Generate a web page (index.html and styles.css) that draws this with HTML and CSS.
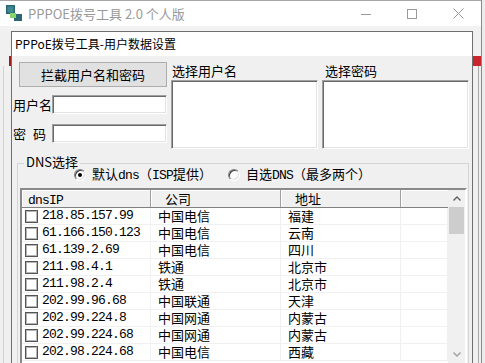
FILE: index.html
```html
<!DOCTYPE html>
<html lang="zh-CN">
<head>
    <meta charset="UTF-8">
    <meta name="viewport" content="width=device-width, initial-scale=1.0">
    <title>PPPOE拨号工具 2.0 个人版</title>
    <link rel="stylesheet" href="styles.css">
</head>
<body>
    <div class="screen">
        <div class="win">
            <div class="titlebar">
                <svg class="app-icon" width="16" height="16" viewBox="0 0 16 16">
                    <rect x="0" y="0" width="9" height="9" fill="#2b6673"/>
                    <rect x="1.5" y="1.5" width="6" height="6" fill="#3f8a93"/>
                    <rect x="8" y="9" width="8" height="7" fill="#2b6673"/>
                    <rect x="4" y="8" width="6" height="5" fill="#86d46c"/>
                </svg>
                <span class="title">PPPOE拨号工具 2.0 个人版</span>
                <div class="controls">
                    <span class="ctl">
                        <svg width="10" height="10" viewBox="0 0 10 10"><path d="M0 5.5H10" stroke="#9a9a9a" stroke-width="1"/></svg>
                    </span>
                    <span class="ctl">
                        <svg width="10" height="10" viewBox="0 0 10 10"><rect x="0.5" y="0.5" width="9" height="9" fill="none" stroke="#9a9a9a" stroke-width="1"/></svg>
                    </span>
                    <span class="ctl">
                        <svg width="11" height="11" viewBox="0 0 11 11"><path d="M0.5 0.5L10.5 10.5M10.5 0.5L0.5 10.5" stroke="#9a9a9a" stroke-width="1"/></svg>
                    </span>
                </div>
            </div>
            <div class="band"></div>

            <div class="client">
                <div class="side side-left">
                    <i class="red-mark"></i>
                    <i class="ghost-line"></i>
                </div>

                <div class="child">
                    <div class="child-title">PPPoE拨号工具-用户数据设置</div>
                    <div class="child-body">
                        <div class="top">
                            <div class="col-login">
                                <button type="button" class="btn">拦截用户名和密码</button>
                                <div class="field first">
                                    <label for="user">用户名</label>
                                    <input type="text" id="user" class="sunken">
                                </div>
                                <div class="field">
                                    <label for="pass" class="spaced">密 码</label>
                                    <input type="text" id="pass" class="sunken">
                                </div>
                            </div>
                            <div class="col-pick">
                                <div class="pick-label">选择用户名</div>
                                <div class="listbox sunken"></div>
                            </div>
                            <div class="col-pick">
                                <div class="pick-label shift">选择密码</div>
                                <div class="listbox sunken"></div>
                            </div>
                        </div>

                        <fieldset class="group">
                            <legend>DNS选择</legend>
                            <div class="radios">
                                <label class="radio-item wide">
                                    <span class="radio checked"></span>
                                    <span>默认<span class="en">dns</span>（<span class="en">ISP</span>提供）</span>
                                </label>
                                <label class="radio-item">
                                    <span class="radio"></span>
                                    <span>自选<span class="en">DNS</span>（最多两个）</span>
                                </label>
                            </div>

                            <div class="listview sunken">
                                <div class="lv-main">
                                    <div class="lv-head">
                                        <div class="hcell c1"><span class="en">dnsIP</span></div>
                                        <div class="hcell c2">公司</div>
                                        <div class="hcell c3">地址</div>
                                        <div class="hcell c4"></div>
                                    </div>
                                    <div id="rows"></div>
                                </div>
                                <div class="scrollbar">
                                    <div class="sb-btn">
                                        <svg width="8" height="5" viewBox="0 0 8 5"><path d="M0.5 4.5L4 1L7.5 4.5" fill="none" stroke="#606060" stroke-width="1.4"/></svg>
                                    </div>
                                    <div class="sb-thumb"></div>
                                    <div class="sb-track"></div>
                                    <div class="sb-btn">
                                        <svg width="8" height="5" viewBox="0 0 8 5"><path d="M0.5 0.5L4 4L7.5 0.5" fill="none" stroke="#a0a0a0" stroke-width="1.4"/></svg>
                                    </div>
                                </div>
                            </div>
                        </fieldset>
                    </div>
                </div>

                <div class="side side-right">
                    <i class="red-mark"></i>
                    <i class="ghost-line"></i>
                </div>
            </div>
        </div>
    </div>

    <script>
        const dnsList = [
            ["218.85.157.99", "中国电信", "福建"],
            ["61.166.150.123", "中国电信", "云南"],
            ["61.139.2.69", "中国电信", "四川"],
            ["211.98.4.1", "铁通", "北京市"],
            ["211.98.2.4", "铁通", "北京市"],
            ["202.99.96.68", "中国联通", "天津"],
            ["202.99.224.8", "中国网通", "内蒙古"],
            ["202.99.224.68", "中国网通", "内蒙古"],
            ["202.98.224.68", "中国电信", "西藏"]
        ];

        const rows = document.getElementById("rows");
        dnsList.forEach(function (item) {
            rows.innerHTML += `
                <div class="lv-row">
                    <div class="cell c1"><span class="check"></span><span class="en">${item[0]}</span></div>
                    <div class="cell c2">${item[1]}</div>
                    <div class="cell c3">${item[2]}</div>
                    <div class="cell c4"></div>
                </div>
            `;
        });
    </script>
</body>
</html>
```

FILE: styles.css
```css
body {
    margin: 0;
    background-color: #ececec;
    font-family: "Noto Sans CJK SC", sans-serif;
    font-size: 13px;
    color: #000;
}

.screen {
    width: 485px;
    height: 363px;
    overflow: hidden;
    background-color: #ececec;
}

.win {
    width: 481px;
    height: 363px;
    border-right: 1px solid #8a8a8a;
    background-color: #f0f0f0;
}

.titlebar {
    height: 25px;
    border-top: 1px solid #a8a8a8;
    background-color: #ffffff;
    display: flex;
    align-items: center;
}

.app-icon {
    margin-left: 6px;
    margin-top: -1px;
    flex: none;
}

.title {
    margin-left: 6px;
    color: #9a9a9a;
    font-size: 13px;
    line-height: 16px;
    white-space: nowrap;
}

.controls {
    margin-left: auto;
    display: flex;
    height: 25px;
}

.ctl {
    width: 46px;
    display: flex;
    align-items: center;
    justify-content: center;
}

.band {
    height: 5px;
    background-color: #f2f2f2;
}

.client {
    display: flex;
    height: 332px;
}

.side {
    flex: none;
    display: flex;
    flex-direction: column;
    background-color: #f0f0f0;
}

.side-left {
    width: 11px;
    align-items: flex-end;
}

.side-right {
    width: 8px;
    align-items: flex-start;
}

.red-mark {
    display: block;
    margin-top: 25px;
    width: 2px;
    height: 10px;
    background-color: #a11d1d;
}

.side-right .red-mark {
    width: 8px;
    background-color: #c8262c;
}

.ghost-line {
    display: block;
    flex: 1;
    width: 0;
    border-left: 1px solid #d2d2d2;
}

.side-left .ghost-line {
    align-self: flex-start;
    margin-left: 3px;
}

.side-right .ghost-line {
    margin-left: 5px;
    border-left-color: #a8a8a8;
}

.child {
    width: 460px;
    border: 1px solid #6f6f6f;
    border-bottom: none;
    display: flex;
    flex-direction: column;
}

.child-title {
    height: 24px;
    background-color: #ffffff;
    padding-left: 3px;
    line-height: 24px;
    font-size: 12px;
    white-space: nowrap;
}

.child-body {
    flex: 1;
    background-color: #f0f0f0;
    overflow: hidden;
}

.top {
    display: flex;
}

.col-login {
    width: 155px;
    padding-top: 6px;
}

.btn {
    display: block;
    margin-left: 7px;
    width: 148px;
    height: 25px;
    padding: 0;
    background-color: #e1e1e1;
    border: 1px solid #adadad;
    font-family: "Noto Sans CJK SC", sans-serif;
    font-size: 13px;
    line-height: 20px;
    color: #000;
}

.field {
    display: flex;
    align-items: center;
    margin-top: 10px;
}

.field.first {
    margin-top: 8px;
}

.field label {
    width: 39px;
    padding-left: 1px;
    line-height: 16px;
    white-space: nowrap;
}

.spaced {
    word-spacing: 4px;
}

.sunken {
    box-sizing: border-box;
    background-color: #ffffff;
    border-style: solid;
    border-width: 1px;
    border-color: #a0a0a0 #ffffff #ffffff #a0a0a0;
    box-shadow: inset 1px 1px 0 #696969, inset -1px -1px 0 #e3e3e3;
}

.field input {
    width: 115px;
    height: 19px;
    padding: 0;
    margin: 0;
    outline: none;
}

.col-pick {
    width: 147px;
    margin-left: 4px;
}

.pick-label {
    height: 24px;
    padding-left: 1px;
    box-sizing: border-box;
    padding-top: 7px;
    line-height: 16px;
}

.pick-label.shift {
    padding-left: 3px;
}

.listbox {
    height: 69px;
}

.group {
    margin: 6px 0 0 5px;
    padding: 0;
    width: 452px;
    box-sizing: border-box;
    min-width: 0;
    border: 1px solid #d5d5d5;
    border-bottom: none;
    height: 260px;
}

.group legend {
    margin-left: 6px;
    padding: 0 2px 4px 2px;
    line-height: 13px;
    font-size: 13px;
}

.en {
    font-family: "Liberation Mono", monospace;
    font-size: 13px;
    letter-spacing: -0.8px;
}

.radios {
    display: flex;
    height: 12px;
    margin-top: -3px;
    padding-left: 56px;
}

.radio-item {
    display: flex;
    align-items: center;
    white-space: nowrap;
    line-height: 12px;
}

.radio-item.wide {
    width: 154px;
}

.radio {
    box-sizing: border-box;
    width: 12px;
    height: 12px;
    margin-right: 6px;
    border-radius: 50%;
    background-color: #ffffff;
    border: 1px solid;
    border-color: #808080 #ffffff #ffffff #808080;
    box-shadow: inset 1px 1px 0 #404040, inset -1px -1px 0 #dcdcdc;
    display: flex;
    align-items: center;
    justify-content: center;
}

.radio.checked::after {
    content: "";
    width: 4px;
    height: 4px;
    border-radius: 50%;
    background-color: #000;
}

.listview {
    margin: 7px 0 0 2px;
    width: 447px;
    height: 200px;
    border-width: 2px;
    border-color: #8a8a8a #ffffff #ffffff #8a8a8a;
    box-shadow: inset 1px 1px 0 #5a5a5a;
    display: flex;
}

.lv-main {
    width: 426px;
    background-color: #ffffff;
}

.lv-head {
    display: flex;
    height: 18px;
    box-sizing: border-box;
    border-bottom: 1px solid #808080;
    background-color: #f0f0f0;
}

.hcell {
    box-sizing: border-box;
    height: 17px;
    line-height: 17px;
    border-right: 1px solid #a0a0a0;
    box-shadow: inset 1px 1px 0 #ffffff;
    white-space: nowrap;
}

.hcell.c1 {
    padding-left: 6px;
}

.hcell.c2,
.hcell.c3 {
    padding-left: 14px;
}

.c1 {
    width: 129px;
}

.c2 {
    width: 130px;
}

.c3 {
    width: 120px;
}

.c4 {
    width: 47px;
}

.hcell.c4 {
    border-right: none;
}

.lv-row {
    display: flex;
    height: 17px;
    box-sizing: border-box;
    border-bottom: 1px solid #f0f0f0;
}

.cell {
    box-sizing: border-box;
    border-right: 1px solid #f0f0f0;
    line-height: 16px;
    white-space: nowrap;
    display: flex;
    align-items: center;
}

.cell.c2,
.cell.c3 {
    padding-left: 7px;
}

.check {
    box-sizing: border-box;
    width: 13px;
    height: 13px;
    margin-left: 3px;
    margin-right: 4px;
    border: 1px solid #555555;
    box-shadow: inset 0 0 0 1px #b5b5b5;
    background-color: #ffffff;
    flex: none;
}

.scrollbar {
    width: 17px;
    background-color: #f0f0f0;
    display: flex;
    flex-direction: column;
}

.sb-btn {
    height: 17px;
    display: flex;
    align-items: center;
    justify-content: center;
    flex: none;
}

.sb-thumb {
    height: 27px;
    margin: 0 1px;
    background-color: #cdcdcd;
    flex: none;
}

.sb-track {
    height: 112px;
}
```
